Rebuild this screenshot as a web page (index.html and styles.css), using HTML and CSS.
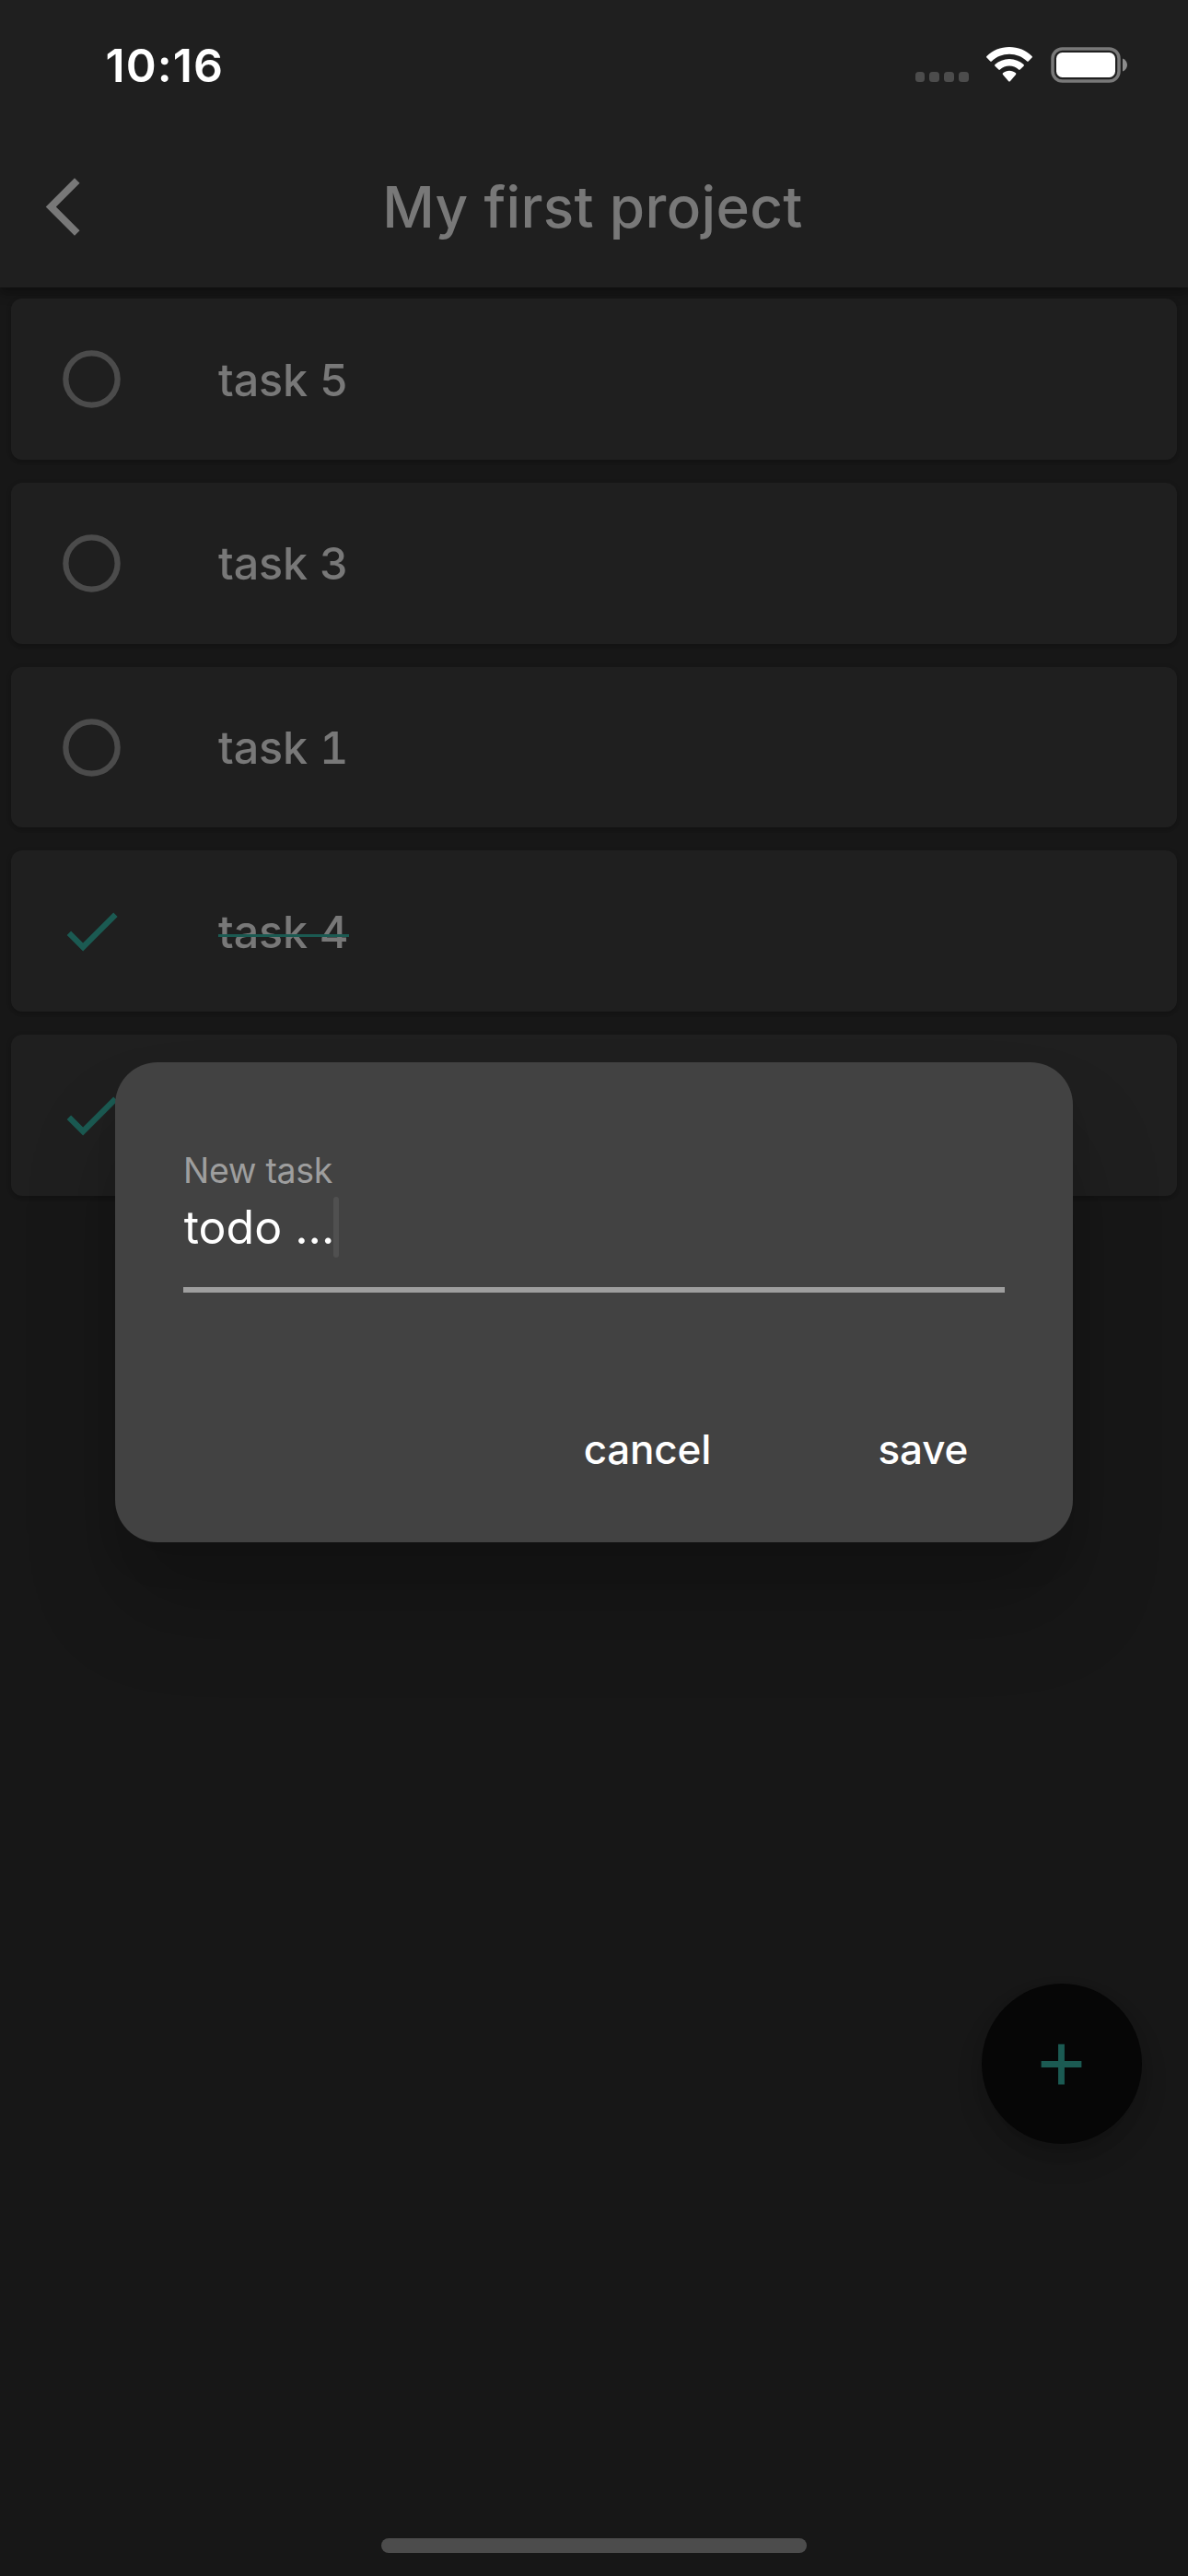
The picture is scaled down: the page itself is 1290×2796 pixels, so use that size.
FILE: index.html
```
<!DOCTYPE html>
<html lang="en">
<head>
<meta charset="utf-8">
<title>My first project</title>
<link rel="stylesheet" href="styles.css">
</head>
<body>
<div class="screen">
  <header class="header">
    <div class="status">
      <span class="time">10:16</span>
      <div class="indicators">
        <div class="signal"><i></i><i></i><i></i><i></i></div>
        <svg class="wifi" viewBox="0 0 50 38" aria-hidden="true">
          <path d="M25 0C34.500 0 43.200 3.600 49.600 9.900Q50.300 10.700 49.600 11.500L45.700 15.400Q45 16.100 44.200 15.400C39 10.500 32.300 7.700 25 7.700S11 10.500 5.800 15.400Q5 16.100 4.300 15.400L0.400 11.500Q-0.300 10.700 0.400 9.900C6.800 3.600 15.500 0 25 0Z"/>
          <path d="M25 12.900C31 12.900 36.400 15.200 40.600 19.100Q41.300 19.900 40.600 20.700L36.600 24.600Q35.900 25.300 35.100 24.600C32.300 22.100 28.800 20.600 25 20.600S17.700 22.100 14.900 24.600Q14.100 25.300 13.400 24.600L9.400 20.700Q8.700 19.900 9.400 19.100C13.600 15.200 19 12.900 25 12.900Z"/>
          <path d="M25 25.700C27.700 25.700 30 26.600 32 28.300Q32.800 29.100 32 29.900L25.800 37.200Q25 38 24.200 37.200L18 29.900Q17.200 29.100 18 28.300C20 26.600 22.300 25.700 25 25.700Z"/>
        </svg>
        <svg class="battery" viewBox="0 0 83 39" aria-hidden="true">
          <rect class="shell" x="2" y="2" width="72" height="35" rx="10.500"/>
          <rect class="charge" x="6" y="6" width="64" height="27" rx="6.500"/>
          <path class="cap" d="M78 12.500C81 13.500 83 16.200 83 19.500S81 25.500 78 26.500Z"/>
        </svg>
      </div>
    </div>
    <div class="appbar">
      <svg class="icon back" viewBox="0 0 24 24" aria-label="Back"><path d="M17.770 3.770 16 2 6 12l10 10 1.770-1.770L9.540 12z"/></svg>
      <h1 class="title">My first project</h1>
    </div>
  </header>

  <main class="tasks">
    <div class="card">
      <svg class="icon open" viewBox="0 0 24 24"><circle cx="12" cy="12" r="9"/></svg>
      <span class="name">task 5</span>
    </div>
    <div class="card">
      <svg class="icon open" viewBox="0 0 24 24"><circle cx="12" cy="12" r="9"/></svg>
      <span class="name">task 3</span>
    </div>
    <div class="card">
      <svg class="icon open" viewBox="0 0 24 24"><circle cx="12" cy="12" r="9"/></svg>
      <span class="name">task 1</span>
    </div>
    <div class="card">
      <svg class="icon done" viewBox="0 0 24 24"><path d="M9 16.170L4.830 12l-1.420 1.410L9 19 21 7l-1.410-1.410z"/></svg>
      <span class="name struck">task 4</span>
    </div>
    <div class="card">
      <svg class="icon done" viewBox="0 0 24 24"><path d="M9 16.170L4.830 12l-1.420 1.410L9 19 21 7l-1.410-1.410z"/></svg>
    </div>
  </main>

  <div class="fab">
    <svg class="icon done" viewBox="0 0 24 24" aria-label="Add task"><path d="M19 13.100h-5.900V19h-2.200v-5.900H5v-2.200h5.900V5h2.200v5.900H19z"/></svg>
  </div>

  <section class="dialog">
    <div class="label">New task</div>
    <div class="field"><span class="value">todo ...</span><span class="caret"></span></div>
    <div class="actions">
      <div class="action">cancel</div>
      <div class="action">save</div>
    </div>
  </section>

  <div class="home"></div>
</div>
</body>
</html>
```
FILE: styles.css
```
* { box-sizing: border-box; }

body {
  margin: 0;
  background: #171717;
  font-family: Inter, "Liberation Sans", sans-serif;
}

.screen {
  position: relative;
  display: flex;
  flex-direction: column;
  width: 1290px;
  height: 2796px;
  overflow: hidden;
  background: #171717;
}

.icon {
  width: 75px;
  height: 75px;
  flex: none;
}

/* Header */
.header {
  height: 312px;
  flex: none;
  background: #1f1f1f;
  box-shadow: 0 6px 12px rgba(0, 0, 0, 0.3), 0 3px 6px rgba(0, 0, 0, 0.1);
}

.status {
  display: flex;
  justify-content: space-between;
  height: 137px;
  padding: 0 66px 0 114.5px;
}

.time {
  font-size: 50px;
  font-weight: 600;
  line-height: 60px;
  letter-spacing: 1.07px;
  margin-top: 41px;
  color: #fff;
}

.indicators {
  display: flex;
  align-items: flex-start;
  height: 39px;
  margin-top: 51px;
}

.signal {
  display: flex;
  gap: 5px;
  margin: 27px 19.500px 0 0;
}

.signal i {
  width: 10.700px;
  height: 11px;
  border-radius: 3.500px;
  background: #4c4c4c;
}

.wifi {
  width: 50px;
  height: 38px;
  margin-right: 20px;
  fill: #fff;
}

.battery {
  width: 83px;
  height: 39px;
}

.shell { fill: none; stroke: #797979; stroke-width: 3.500; }
.charge { fill: #fff; }
.cap { fill: #8c8c8c; }

.appbar {
  display: grid;
  grid-template-columns: 75px 1fr 75px;
  align-items: center;
  height: 175px;
  padding: 0 31px;
}

.back { fill: #787878; }

.title {
  margin: 0;
  text-align: center;
  font-size: 62px;
  font-weight: 500;
  line-height: 76px;
  letter-spacing: 0.350px;
  padding-right: 3px;
  color: #787878;
}

/* Task list */
.tasks {
  display: flex;
  flex-direction: column;
  gap: 25px;
  padding: 12.300px 12.300px 0;
}

.card {
  display: flex;
  align-items: center;
  gap: 100px;
  height: 174.700px;
  padding: 0 49.700px;
  border-radius: 12px;
  background: #1f1f1f;
  box-shadow: 0 3px 3px rgba(0, 0, 0, 0.140), 0 1px 6px rgba(0, 0, 0, 0.080);
}

.open { fill: none; stroke: #4b4b4b; stroke-width: 2; }
.done { fill: #1b5a52; }

.name {
  position: relative;
  top: 1px;
  width: 142.500px;
  font-size: 48.500px;
  font-weight: 450;
  line-height: 60px;
  letter-spacing: -0.100px;
  font-variant-numeric: tabular-nums;
  white-space: nowrap;
  color: #787878;
}

.struck::after {
  content: "";
  position: absolute;
  left: 0;
  right: 0;
  top: 32px;
  height: 3px;
  background: #1b5a52;
}

/* Add button */
.fab {
  position: absolute;
  left: 1065.600px;
  top: 2152.700px;
  display: flex;
  align-items: center;
  justify-content: center;
  width: 174.700px;
  height: 174.700px;
  border-radius: 50%;
  background: #060606;
  box-shadow: 0 18px 30px rgba(0, 0, 0, 0.140), 0 9px 15px rgba(0, 0, 0, 0.080);
}

/* New task dialog */
.dialog {
  position: absolute;
  left: 124.700px;
  top: 1152.700px;
  width: 1040.700px;
  height: 521.700px;
  padding: 95.300px 74.300px 0;
  border-radius: 46px;
  background: #424242;
  box-shadow: 0 33px 45px -21px rgba(0, 0, 0, 0.120), 0 72px 100px rgba(0, 0, 0, 0.190);
}

.label {
  font-size: 37.500px;
  line-height: 45px;
  letter-spacing: -0.300px;
  color: #9e9e9e;
}

.field {
  display: flex;
  height: 104.300px;
  margin-top: 6px;
  border-bottom: 6.500px solid #9e9e9e;
}

.value {
  font-size: 50px;
  line-height: 66px;
  width: 163.500px;
  padding-left: 0.700px;
  white-space: nowrap;
  color: #fff;
}

.caret {
  width: 6px;
  height: 66px;
  border-radius: 3px;
  background: #505050;
}

.actions {
  display: flex;
  justify-content: flex-end;
  gap: 181.500px;
  margin-top: 106px;
  padding-right: 40px;
}

.action {
  font-size: 44px;
  font-weight: 500;
  line-height: 128px;
  letter-spacing: -0.200px;
  color: #fff;
}

.home {
  position: absolute;
  left: 414px;
  bottom: 25px;
  width: 462px;
  height: 16px;
  border-radius: 8px;
  background: #4c4c4c;
}
```
